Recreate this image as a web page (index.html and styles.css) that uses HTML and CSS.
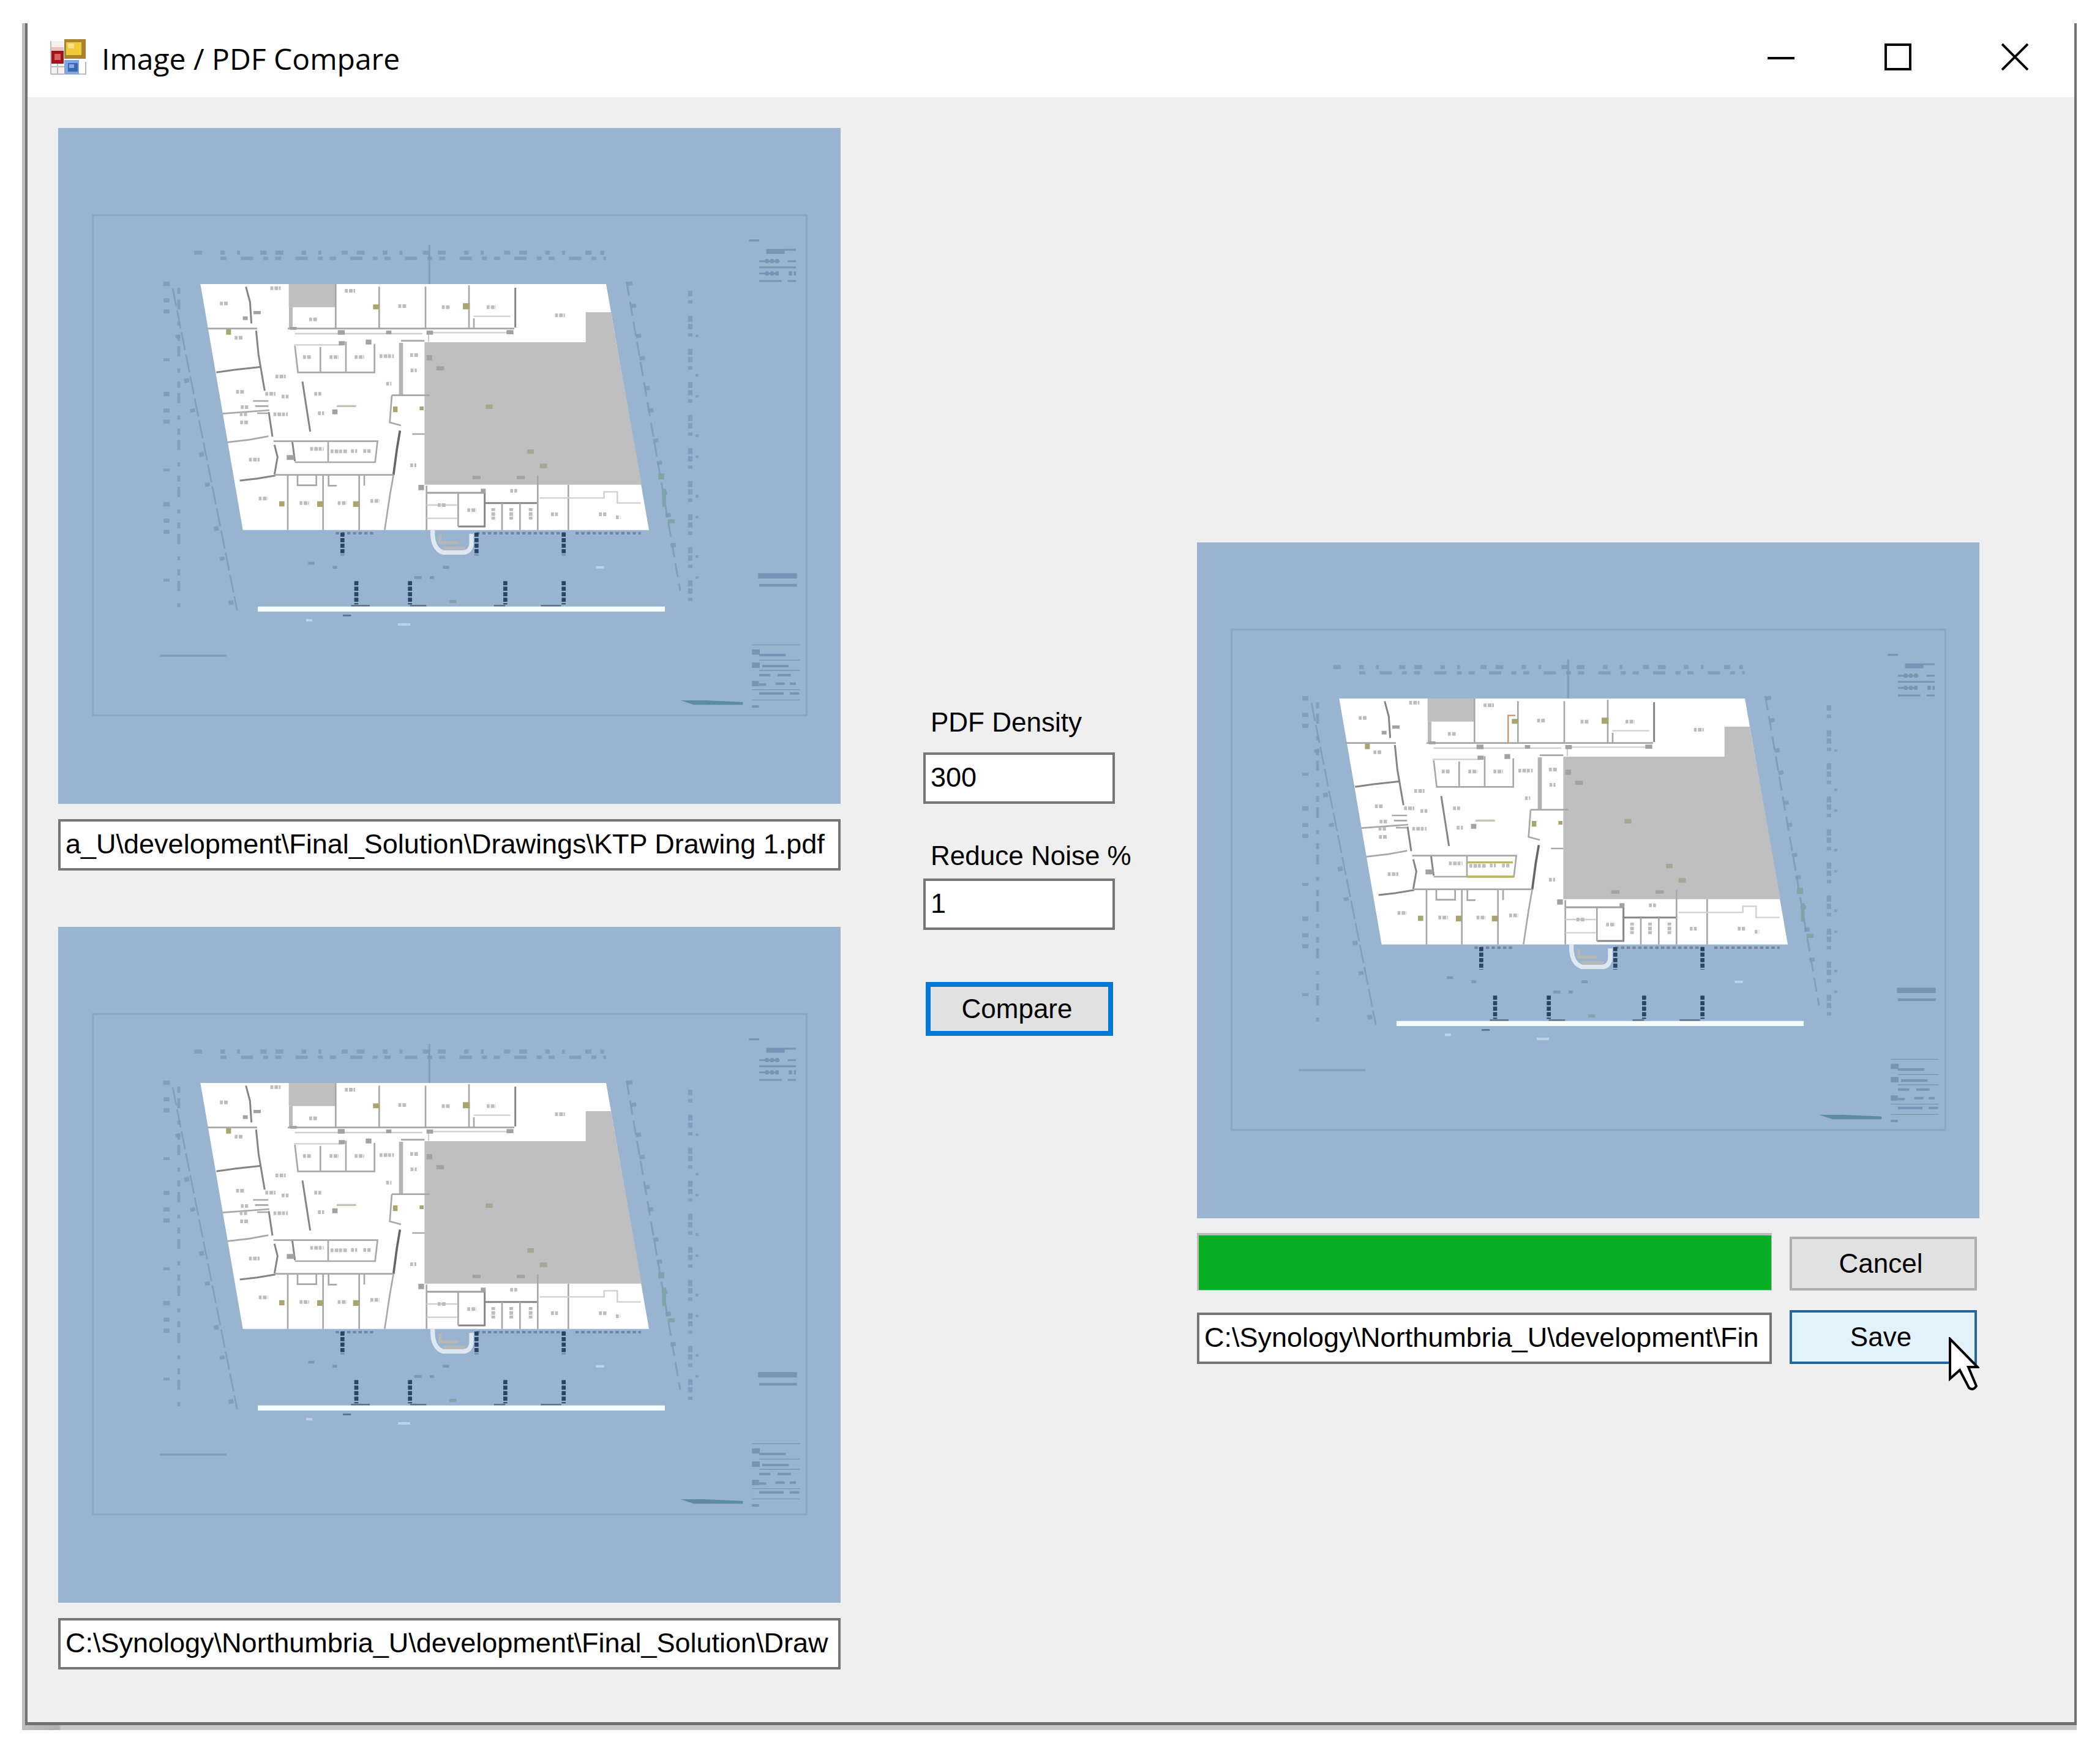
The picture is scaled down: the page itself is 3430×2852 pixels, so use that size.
FILE: index.html
```html
<!DOCTYPE html>
<html lang="en">
<head>
<meta charset="utf-8">
<title>Image / PDF Compare</title>
<link rel="stylesheet" href="styles.css">
</head>
<body>
<svg class="defs" aria-hidden="true">
  <symbol id="plan" viewBox="-435 -513 3834 3312">
    <rect x="-265" y="-86" width="3497" height="2452" fill="none" stroke="#8aa5c6" stroke-width="9"/>
    <!-- grid-line markers round the building -->
    <g fill="none" stroke="#7d97b9" stroke-opacity=".8">
      <path stroke-width="20" stroke-dasharray="38 90 22 60 14 100 30 44" d="M232 98H2240"/>
      <path stroke-width="16" stroke-dasharray="30 70 60 50 24 34" d="M360 126H2250"/>
      <path stroke-width="30" stroke-dasharray="22 60 20 34 20 220 14 150" d="M96 240V1860"/>
      <path stroke-width="14" stroke-dasharray="30 26 50 60 20 44" d="M156 270V1860"/>
      <path stroke-width="8" stroke-dasharray="90 20" d="M126 273 442 1852"/>
      <path stroke-width="24" stroke-dasharray="18 200 22 130" d="M150 500 420 1852"/>
      <path stroke-width="9" stroke-dasharray="70 30" d="M2350 240 2613 1756"/>
      <path stroke-width="26" stroke-dasharray="20 90 20 130" d="M2364 240 2590 1600"/>
      <path stroke-width="22" stroke-dasharray="26 20 16 60 30 10" d="M2662 285V1852"/>
      <path stroke-width="14" stroke-dasharray="12 180 14 90" d="M2695 500V1852"/>
      <path stroke-width="10" d="M63 2073H390M1384 60V252"/>
    </g>
    <!-- legend, notes and title block -->
    <g fill="none" stroke="#7893b5">
      <path stroke-width="10" d="M2950 38h50"/>
      <path stroke-width="24" d="M3035 92h90"/>
      <path stroke-width="9" d="M3125 84h55M3000 140h100M3140 140h40M3000 170h180M3000 200h95M3000 237h110M3140 237h40"/>
      <path stroke-width="20" stroke-dasharray="16 9" d="M3030 140h70M3030 200h70M3145 200h35"/>
      <path stroke-width="26" d="M2995 1682h190"/>
      <path stroke-width="14" d="M3000 1728h185"/>
      <path stroke-width="26" d="M2965 2055h38M2965 2120h38M2965 2210h34"/>
      <path stroke-width="12" d="M3000 2070h130M3015 2124h130M3000 2168h55M3090 2168h65M3000 2215h34M3080 2210h45M3150 2210h30M3000 2258h120M3150 2258h46M2965 2322h34"/>
      <path stroke-width="4" d="M2965 2020h235M3000 2095h200M3000 2145h200M2965 2240h235M2965 2290h235"/>
    </g>
    <path d="M2615 2292h120l185 8v14h-240z" fill="#5c8ba6"/>
    <!-- floor plate -->
    <path d="M262 252H2250L2460 1457H470z" fill="#fff"/>
    <path d="M1360 537H2150V390H2274L2424 1235H1360z" fill="#bfbfbf"/>
    <path d="M695 252H925V365H695z" fill="#bfbfbf"/>
    <!-- heavy walls -->
    <g fill="none" stroke="#858585" stroke-width="9">
      <path d="M485 265 505 340 512 445M535 480 547 600 577 775M597 880 615 1000M625 1040 640 1100 625 1185"/>
      <path d="M340 685 430 672 560 658M455 1215 540 1205 630 1190M762 730 800 975M712 1022 725 1120"/>
      <path d="M1240 970 1225 1060 1208 1187" stroke="#666" stroke-width="11"/>
      <path d="M1805 270V465M1655 1275V1440H1525M1655 1325H1915"/>
      <path d="M1370 1275H1650" stroke="#a0a0a0"/>
    </g>
    <!-- partitions -->
    <g fill="none" stroke="#a8a8a8" stroke-width="8">
      <path d="M295 470H540M370 887 600 870M395 1027 500 1015 595 998M520 825H595M530 850H595M540 885H595"/>
      <path d="M690 470H1800M925 252V470M1138 265V470M1365 265V470M1578 258V470M1602 470V420"/>
      <path d="M705 365V470" stroke="#bbb" stroke-width="18"/>
      <path d="M725 555 740 685H1115V545M850 560V685M975 535V685"/>
      <path d="M1245 540V797" stroke="#b4b4b4" stroke-width="20"/>
      <path d="M1245 530H1360M1200 797H1385M1200 797 1190 930 1245 945M1300 987H1360"/>
      <path d="M620 1022H1130L1118 1125H725M888 1022V1125M625 1187H1208M690 1190V1457M863 1190V1457M1040 1190V1457M1208 1187 1190 1290 1165 1457"/>
      <path d="M738 1190V1238H830V1190M890 1190V1240H930M1065 1190V1240"/>
      <path d="M1370 1240V1457M1525 1275V1440M1740 1325V1457M1828 1325V1457M1915 1190V1457M2065 1235V1457"/>
    </g>
    <g fill="none" stroke="#cfcfcf" stroke-width="7">
      <path d="M725 495H1350M1380 490H1790M1380 480V535M1370 1335H1520M1370 1400H1520M1925 1300H2240V1270H2305V1325H2420M720 550H960M1600 410H1780"/>
    </g>
    <!-- room numbers -->
    <g fill="none" stroke="#bdbdbd" stroke-width="18" stroke-dasharray="14 6 18 4">
      <path d="M358 347h42M430 515h38M437 780h42M457 930h40M500 1112h52M548 1303h44M748 1325h46M935 1325h44M1095 1315h44M630 705h50M660 803h34M605 272h50M970 285h50M1232 360h38M1445 365h42M1665 365h44M2000 405h48M795 425h40M765 610h38M895 610h44M1018 610h46M1140 605h70M1290 1140h30M1172 740h26M1292 675h30M800 1060h66M1000 1070h30M1060 1070h36M900 1072h80M1290 600h40"/>
      <path d="M820 790h34M838 885h30M1425 1335h42M1570 1360h44M1780 1265h34M1980 1380h34M2215 1380h36M2298 1395h22M620 890h70M580 790h50M460 855h36M455 890h36"/>
      <path d="M1697 1350v60M1785 1350v60M1880 1350v60"/>
    </g>
    <path d="M930 850h95" stroke="#c4c4b0" stroke-width="10"/>
    <g fill="#a2a2a2">
      <path d="M470 410h24v18h-24zM522 384h36v16h-36zM935 478h34v22h-34zM1172 480h26v18h-26zM1370 480h32v20h-32zM1762 478h34v20h-34zM940 532h30v20h-30zM1072 524h28v24h-28zM1330 1236h28v26h-28zM1636 1255h24v22h-24zM685 1090h38v24h-38z"/>
      <path d="M1418 655h38v20h-38zM1595 1192h40v16h-40zM1812 1192h40v16h-40zM1370 600h28v26h-28z"/>
      <path d="M908 866h26v24h-26zM700 462h34v14h-34z"/>
    </g>
    <g fill="#aaa56e">
      <path d="M648 1316h26v26h-26zM834 1316h28v28h-28zM1010 1316h30v28h-30zM1108 352h32v24h-32zM1548 346h34v30h-34zM388 474h24v26h-24zM1206 852h22v28h-22zM1336 852h20v18h-20z"/>
      <path d="M1660 842h34v22h-34zM1864 1062h32v22h-32zM1925 1132h36v22h-36z" fill="#a8a795"/>
    </g>
    <!-- entrance steps -->
    <path d="M925 1473H1120M1615 1473H2050M2100 1473H2420" fill="none" stroke="#74869d" stroke-width="12" stroke-dasharray="16 12"/>
    <path d="M1400 1457q-4 90 50 110h100q34 0 40-40v-50" fill="none" stroke="#dfe8f0" stroke-width="22"/>
    <path d="M1436 1480v40h90M1450 1546h110" fill="none" stroke="#b9b6b4" stroke-width="14"/>
    <!-- canopy columns -->
    <g fill="none" stroke="#2c4463" stroke-width="20" stroke-dasharray="20 7">
      <path d="M958 1470V1580M1615 1470V1580M2042 1470V1580M1026 1708V1822M1289 1708V1822M1756 1708V1822M2042 1708V1822"/>
    </g>
    <path d="M1000 1828h92M1289 1828h80M1700 1828h56M1930 1828h100M960 1876h40" stroke="#5d718f" stroke-width="8"/>
    <path d="M543 1832H2538V1857H543z" fill="#f4fdff"/>
    <path d="M1310 1690h36M1386 1690h20M790 1620h30M910 1640h22M1450 1640h30" stroke="#7d97b9" stroke-width="14"/>
    <path d="M2200 1640h40M780 1900h30M1230 1920h60" stroke="#bcd3ea" stroke-width="12"/>
    <path d="M1482 1800h34v16h-34zM2505 1180h30v30h-30zM2525 1255h18v90h-18zM2552 1405h34v20h-34z" fill="#7fa5a8"/>
  </symbol>
</svg>

<main class="shell">
  <div class="window">
    <header class="titlebar">
      <svg class="app-icon" viewBox="0 0 60 60" aria-hidden="true">
        <path d="M2 4h20v56H2z" fill="#f6f1ef"/>
        <path d="M1 4v54M1 46h22M12 40v18M1 58h58M58 38v20" stroke="#b9bcc2" stroke-width="2"/>
        <path d="M2 14h20v8H2z" fill="#f0c0bc"/>
        <path d="M2 20h20v21H2z" fill="#a5121a"/><path d="M7 25h10v10H7z" fill="#d76464"/>
        <path d="M23 1h35v32H23z" fill="#a8852c"/><path d="M26 6h25v21H26z" fill="#f2c83c"/><path d="M29 8h10v8H29z" fill="#fbe28a"/>
        <path d="M23 35h24v23H23z" fill="#7ea6e4"/><path d="M29 40h16v14H29z" fill="#3a66b0"/><path d="M31 42h8v6h-8z" fill="#86aeea"/>
      </svg>
      <h1 class="title">Image / PDF Compare</h1>
      <div class="controls">
        <button class="control" aria-label="Minimize"><svg viewBox="0 0 44 44"><path d="M0 24h44"/></svg></button>
        <button class="control" aria-label="Maximize"><svg viewBox="0 0 44 44"><path d="M2 2h40v40H2z"/></svg></button>
        <button class="control" aria-label="Close"><svg viewBox="0 0 44 44"><path d="M1 1l42 42M43 1L1 43"/></svg></button>
      </div>
    </header>

    <div class="content">
      <section class="sources">
        <div class="source">
          <svg class="preview" role="img" aria-label="First drawing"><use href="#plan"/></svg>
          <input class="field" type="text" aria-label="First file" value="a_U\development\Final_Solution\Drawings\KTP Drawing 1.pdf">
        </div>
        <div class="source">
          <svg class="preview" role="img" aria-label="Second drawing"><use href="#plan"/></svg>
          <input class="field" type="text" aria-label="Second file" value="C:\Synology\Northumbria_U\development\Final_Solution\Draw">
        </div>
      </section>

      <section class="options">
        <label class="label" for="density">PDF Density</label>
        <input class="field" id="density" type="text" value="300">
        <label class="label label-noise" for="noise">Reduce Noise %</label>
        <input class="field" id="noise" type="text" value="1">
        <button class="button button-default">Compare</button>
      </section>

      <section class="result">
        <svg class="preview" viewBox="-435 -513 3834 3312" role="img" aria-label="Comparison result">
          <use href="#plan" x="-435" y="-513" width="3834" height="3312"/>
          <path d="M888 1125h230M888 1055h225" fill="none" stroke="#b9b85a" stroke-width="10"/>
          <path d="M1090 470V335h35" fill="none" stroke="#c9966a" stroke-width="7"/>
        </svg>
        <div class="actions">
          <progress class="progress" max="100" value="100" aria-label="Progress"></progress>
          <button class="button">Cancel</button>
          <input class="field" type="text" aria-label="Output file" value="C:\Synology\Northumbria_U\development\Fin">
          <div class="save">
            <button class="button button-hover">Save</button>
            <svg class="cursor" viewBox="0 0 50 88" aria-hidden="true"><path d="M2 3V68L18 54L33 83Q40 88 45 80L32 49H47Z"/></svg>
          </div>
        </div>
      </section>
    </div>
  </div>
</main>
</body>
</html>
```
FILE: styles.css
```css
* { box-sizing: border-box; }

body {
  margin: 0;
  padding: 38px 38px 26px 36px;
  background: #fff;
  color: #000;
  font-family: "Liberation Sans", Arial, sans-serif;
  font-size: 44px;
}

.defs { position: absolute; width: 0; height: 0; }

.shell {
  padding: 0 0 8px 5px;
  background: linear-gradient(90deg, #bdbdbd 0, #b0b0b0 60px, #c9c9c9 64px);
}

.window {
  background: #efefef;
  border: solid #717171;
  border-width: 0 4px 5px;
}

.titlebar {
  display: flex;
  align-items: center;
  height: 121px;
  padding: 0 37px;
  background: #fff;
}

.app-icon { width: 60px; height: 60px; margin-bottom: 12px; }

.title {
  margin: 0 auto 0 24px;
  padding-bottom: 6px;
  font: 400 48px/64px "Open Sans", "Noto Sans", sans-serif;
}

.controls { display: flex; margin-bottom: 12px; }

.control {
  width: 191px;
  height: 44px;
  padding: 0;
  border: 0;
  background: none;
  text-align: right;
}

.control svg {
  display: block;
  width: 44px;
  height: 44px;
  margin-left: auto;
  fill: none;
  stroke: #000;
  stroke-width: 4px;
}

.controls { padding-right: 38px; }

.content {
  display: grid;
  grid-template-columns: 1278fr 582fr 1278fr;
  align-items: start;
  padding: 50px 155px 86px 50px;
}

.sources { display: grid; gap: 92px; }
.source { display: grid; gap: 25px; }

.preview {
  display: block;
  width: 100%;
  aspect-ratio: 1278 / 1104;
  background: #99b4d1;
}

.field {
  display: block;
  width: 100%;
  height: 84px;
  padding: 0 8px 2px;
  border: 4px solid #767676;
  border-radius: 0;
  background: #fff;
  color: #000;
  font: 45px/52px "Liberation Sans", Arial, sans-serif;
}

.options {
  display: flex;
  flex-direction: column;
  align-items: flex-start;
  padding: 945px 0 0 135px;
}

.options .field { width: 313px; }

.label {
  margin: 0 0 23px 12px;
  line-height: 52px;
  white-space: nowrap;
}

.label-noise { margin: 59px 0 11px 12px; }

.button {
  display: block;
  width: 306px;
  height: 88px;
  padding: 0 8px 0 0;
  border: 4px solid #adadad;
  border-radius: 0;
  background: #e1e1e1;
  color: #000;
  font: 44px/52px "Liberation Sans", Arial, sans-serif;
}

.button-default { margin: 85px 0 0 4px; border: 8px solid #0078d7; }
.button-hover { border-color: #24659b; background: #e3f1fa; }

.result { padding-top: 677px; }

.actions {
  display: grid;
  grid-template-columns: 1fr 306px;
  gap: 32px 29px;
  align-items: end;
  padding: 24px 4px 0 0;
}

.progress {
  display: block;
  width: 100%;
  height: 94px;
  border: solid #bcbcbc;
  border-width: 4px 1px 1px 3px;
  background: #06b025;
  appearance: none;
}

.progress::-webkit-progress-bar { background: #e6e6e6; }
.progress::-webkit-progress-value { background: #06b025; }

.save { position: relative; }

.cursor {
  position: absolute;
  left: 260px;
  top: 44px;
  width: 50px;
  height: 88px;
  fill: #fff;
  stroke: #000;
  stroke-width: 4px;
}
```
